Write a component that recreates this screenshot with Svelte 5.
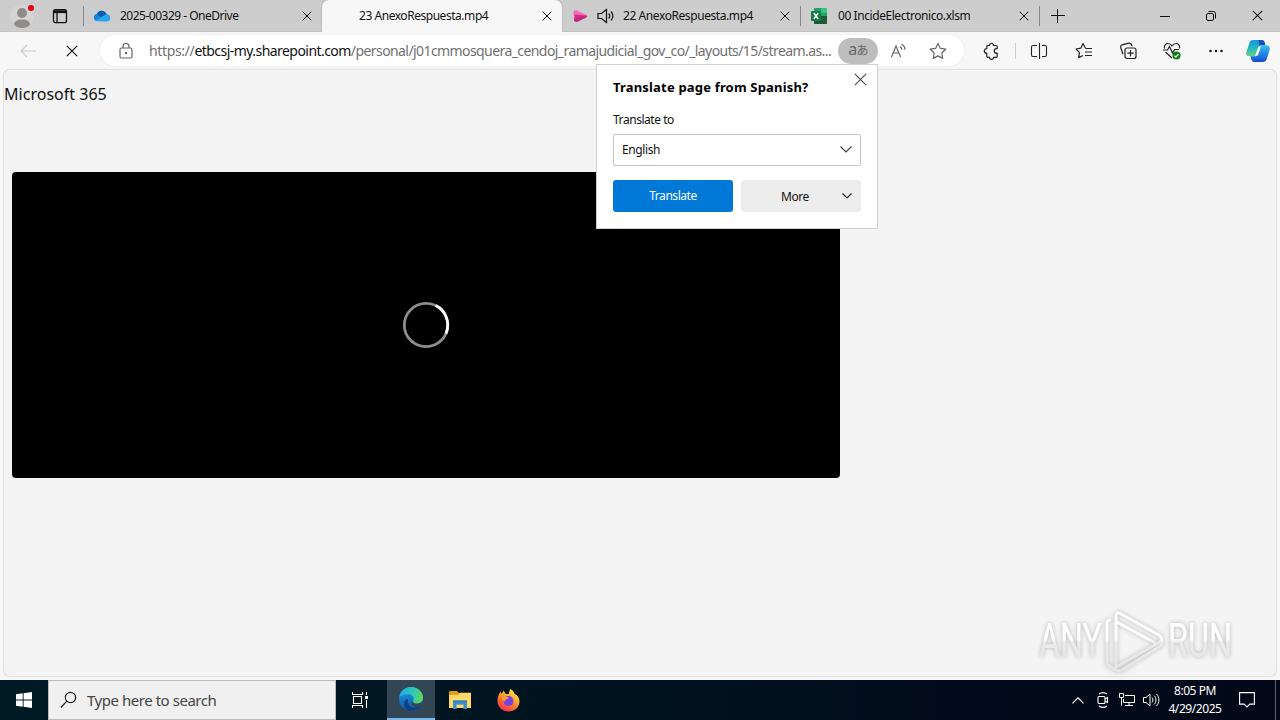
<script>
  const url = {
    scheme: 'https://',
    host: 'etbcsj-my.sharepoint.com',
    path: '/personal/j01cmmosquera_cendoj_ramajudicial_gov_co/_layouts/15/stream.as...'
  };
</script>

{#snippet cross(size)}
  <svg width={size} height={size} viewBox="0 0 10 10" fill="none" stroke="currentColor" stroke-width="1"><path d="M.7.7l8.6 8.6M9.3.7L.7 9.3" /></svg>
{/snippet}

<div class="screen">
  <header class="tabs">
    <div class="profile">
      <svg width="28" height="28" viewBox="0 0 28 28"><circle cx="14" cy="14" r="11.5" fill="#d6d4d3" /><circle cx="14" cy="11" r="5" fill="#8f8c8a" /><path d="M6 22.5c0-3.5 3.5-5 8-5s8 1.500 8 5c-1.500 2.500-5 3.500-8 3.500s-6.500-1-8-3.500z" fill="#8f8c8a" /><circle cx="23" cy="6" r="3" fill="#e3000b" /></svg>
    </div>
    <div class="workspace">
      <svg width="16" height="16" viewBox="0 0 16 16" fill="none" stroke="#111" stroke-width="1.300"><rect x="1.500" y="1.700" width="13" height="13" rx="2" /><path d="M2 3.700h12" stroke-width="2.800" /><path d="M5 5v9" /></svg>
    </div>
    <div class="tab first">
      <svg class="fav" width="18" height="16" viewBox="0 0 18 16"><path d="M4.500 13C2 13 .8 11.500.8 9.600c0-2 1.500-3.300 3.200-3.500C5 3.500 7 2.500 9 2.700c2.500.2 4 1.800 4.500 3.700 2.200.2 3.700 1.500 3.700 3.500s-1.400 3.300-3.500 3.300z" fill="#1684d8" /><path d="M4 6.100C5 3.500 7 2.500 9 2.700c2.300.2 4 1.800 4.400 3.700L8 9z" fill="#0b5cab" /><path d="M3 12.500l6.500-4.200c1-.8 2.500-1.900 4-1.900 2.200.2 3.700 1.500 3.700 3.500s-1.400 3.300-3.500 3.300H4.500z" fill="#2aa5ef" /></svg>
      <span class="t1">2025-00329 - OneDrive</span>
      <i class="shut">{@render cross(10)}</i>
    </div>
    <div class="tab active">
      <span class="t2">23 AnexoRespuesta.mp4</span>
      <i class="shut">{@render cross(10)}</i>
    </div>
    <div class="tab third">
      <svg class="fav" width="16" height="16" viewBox="0 0 16 16"><path d="M1.500 4.500C1.500 2.700 3 2 5 2.500l9 4.200c1.500.7 1.500 2 0 2.700L5.500 13.500C3.500 14.200 2 13 2 11.800V10z" fill="#f06bb4" /><path d="M1.500 5l.5 1.500 12.900 1c.2.900-.1 1.400-1 1.900L5.500 13.500C3.500 14.200 2 13 2 11.800l1-2.600z" fill="#df2690" /><path d="M3 9.700L15 8c0 .6-.3 1.100-1 1.400L5.500 13.500C3.500 14.200 2 13 2 11.800z" fill="#bb2a78" /></svg>
      <svg class="sound" width="18" height="16" viewBox="0 0 18 16" fill="none" stroke="#111" stroke-width="1.200"><path d="M1 5.500h3.500L9.500 1.500v13L4.500 10.500H1z" /><path d="M11.700 5.500c1.300 1.500 1.300 3.500 0 5M14 3.500c2.300 2.700 2.300 6.300 0 9" /></svg>
      <span class="t2">22 AnexoRespuesta.mp4</span>
      <i class="shut">{@render cross(10)}</i>
    </div>
    <div class="tab fourth">
      <svg class="fav" width="16" height="16" viewBox="0 0 16 16"><rect x="3" width="13" height="16" rx="1" fill="#21a366" /><path d="M3 8h13v7a1 1 0 0 1-1 1H4a1 1 0 0 1-1-1z" fill="#185c37" /><path d="M10 0h5a1 1 0 0 1 1 1v4h-6z" fill="#33c481" /><rect y="3" width="10" height="10" rx="1" fill="#107c41" /><path d="M2.800 5l4.400 6M7.200 5l-4.400 6" stroke="#fff" stroke-width="1.500" /></svg>
      <span class="t4">00 IncideElectronico.xlsm</span>
      <i class="shut">{@render cross(10)}</i>
    </div>
    <div class="add"><svg width="14" height="14" viewBox="0 0 14 14" stroke="#111" stroke-width="1"><path d="M0 6.500h14M6.500 0v14" /></svg></div>
    <div class="window">
      <span><svg width="10" height="10" viewBox="0 0 10 10" stroke="#111"><path d="M0 5.500h10" /></svg></span>
      <span><svg width="10" height="10" viewBox="0 0 10 10" fill="none" stroke="#111"><rect x=".5" y="2.500" width="7" height="7" rx="1.500" /><path d="M2.500.5h5a2 2 0 0 1 2 2v5" /></svg></span>
      <span>{@render cross(11)}</span>
    </div>
  </header>

  <nav class="toolbar">
    <div class="nav back"><svg width="16" height="14" viewBox="0 0 16 14" fill="none" stroke="#c9c9c9" stroke-width="1.200"><path d="M16 7H1M7 1L1 7l6 6" /></svg></div>
    <div class="nav stop">{@render cross(12)}</div>
    <div class="address">
      <svg class="lock" width="14" height="16" viewBox="0 0 14 16" fill="none" stroke="#666" stroke-width="1.200"><rect x="1" y="5" width="12" height="10" rx="1.500" /><path d="M4 5V3.500a3 3 0 0 1 6 0V5" /><circle cx="7" cy="10" r=".6" fill="#666" /></svg>
      <span class="url"><span class="scheme">{url.scheme}</span><b>{url.host}</b>{url.path}</span>
      <span class="lang">a<em>あ</em></span>
      <svg class="read" width="18" height="16" viewBox="0 0 18 16" fill="none" stroke="#666" stroke-width="1.200"><path d="M1.500 14L6 3 10.500 14M3.200 10h5.700M10 3.500c1.300.8 1.800 1.800 1.800 3.200M11.500 1.200c2.400 1.200 3.500 3 3.500 5.500" /></svg>
      <svg class="star" width="18" height="18" viewBox="0 0 18 18" fill="none" stroke="#666" stroke-width="1.200" stroke-linejoin="round"><path d="M9 1.500l2.400 4.900 5.300.8-3.900 3.800.9 5.400L9 13.900l-4.700 2.500.9-5.400L1.300 7.200l5.300-.8z" /></svg>
    </div>
    <div class="tools">
      <svg width="18" height="18" viewBox="0 0 18 18" fill="none" stroke="#222" stroke-width="1.200" stroke-linejoin="round"><path d="M4 3.500h2.500c0-3 4-3 4 0H13a1.200 1.200 0 0 1 1.200 1.200v2h-.7c-3 0-3 4.500 0 4.500h.7v3A1.200 1.200 0 0 1 13 15.400h-2.500c0 2.500-4 2.500-4 0H5a1.200 1.200 0 0 1-1.200-1.200v-3c-3.300 0-3.300-4.500 0-4.500z" /></svg>
      <i class="line"></i>
      <svg class="split" width="18" height="18" viewBox="0 0 18 18" fill="none" stroke="#222" stroke-width="1.100"><path d="M7 3.500H3A1.500 1.500 0 0 0 1.500 5v8A1.500 1.500 0 0 0 3 14.500h4M12 3.500h3A1.500 1.500 0 0 1 16.500 5v8a1.500 1.500 0 0 1-1.500 1.500h-3M9.500 1v16" /></svg>
      <svg class="fave" width="18" height="18" viewBox="0 0 18 18" fill="none" stroke="#222" stroke-width="1.200" stroke-linejoin="round"><path d="M10.500 6.200L8 1.500 5.800 6.200l-4.700.8 3.400 3.600-.8 5L8 13.500M10.500 6.500H17M10 10h7M10 13.500h7" /></svg>
      <svg class="coll" width="18" height="18" viewBox="0 0 18 18" fill="none" stroke="#222" stroke-width="1.200"><rect x="6" y="6" width="11" height="10.500" rx="2" /><path d="M11.500 8v6.500M8.300 11.200h6.400M4 12.300L1.700 5.500C1.400 4 2 3.200 3 2.800l7-1.600c1.300-.2 2.100.4 2.500 1.500l.5 1.500" /></svg>
      <svg class="heart" width="18" height="18" viewBox="0 0 18 18" fill="none" stroke="#222" stroke-width="1.200"><path d="M1.500 6.500C.8 3 3 1.500 5 1.500c2 0 3 1 4 2.300 1-1.300 2-2.300 4-2.300s4.200 1.500 3.500 5M2.500 10L9 16M0 8h4.500l2-3.500L9.500 11l2-3.500H16" /><circle cx="13.500" cy="13.500" r="4" fill="#107c10" stroke="none" /><path d="M11.500 13.700l1.400 1.400 2.500-3" stroke="#fff" /></svg>
      <svg class="dots" width="18" height="18" viewBox="0 0 18 18" fill="#222"><circle cx="3.500" cy="9" r="1.300" /><circle cx="9" cy="9" r="1.300" /><circle cx="14.500" cy="9" r="1.300" /></svg>
      <svg class="copilot" width="24" height="24" viewBox="0 0 24 24">
        <defs>
          <linearGradient id="cpA" x1="0" y1="0" x2="0" y2="1"><stop stop-color="#1694df" /><stop offset=".5" stop-color="#24b6c2" /><stop offset="1" stop-color="#62d37d" /></linearGradient>
          <linearGradient id="cpB" x1="0" y1="0" x2="0" y2="1"><stop stop-color="#35c3f2" /><stop offset=".5" stop-color="#2186e5" /><stop offset="1" stop-color="#174bd0" /></linearGradient>
        </defs>
        <path d="M7 1h8.500c2 0 2.800 1.200 3.300 3l.5 2H16c-2 0-3 1-3.500 2.600L10.300 15c-.5 1.500-1.300 2.300-3 2.300H3.500C1 17.300-.2 15.500.3 13.300L3.500 3.500C4 2 5.300 1 7 1z" fill="url(#cpA)" />
        <path d="M17 23H8.500c-2 0-2.800-1.200-3.300-3l-.7-2.700H8c2 0 3-1 3.500-2.600L13.700 9c.5-1.800 1.300-2.700 3-2.700h3.800c2.500 0 3.700 2 3.200 4.400l-3.200 9.800C20 22 18.700 23 17 23z" fill="url(#cpB)" />
        <path d="M12.500 1h3c2 0 2.800 1.200 3.300 3l.6 2.300H16c-1.200 0-2 .4-2.600 1z" fill="#1856b4" />
        <path d="M12.800 8.300h1.100L11.400 15.800h-1.300z" fill="#f7f7f7" stroke="#f7f7f7" stroke-width="1.300" />
      </svg>
    </div>
  </nav>

  <main>
    <div class="page">
      <h1>Microsoft 365</h1>
      <div class="video">
        <svg width="48" height="48" viewBox="0 0 48 48" fill="none" stroke-width="2.800"><circle cx="24" cy="24" r="21.700" stroke="#8d8d8d" /><path d="M33.800 4.600A21.700 21.700 0 0 1 43.900 32.700" stroke="#fff" /></svg>
      </div>
    </div>
    <div class="watermark">
      <svg width="240" height="72" viewBox="0 0 240 72">
        <defs><linearGradient id="wm" x1="0" y1="12" x2="0" y2="62" gradientUnits="userSpaceOnUse"><stop stop-color="#fff" /><stop offset=".45" stop-color="#fff" /><stop offset=".5" stop-color="#ebebeb" /><stop offset="1" stop-color="#e6e6e6" /></linearGradient></defs>
        <g class="brand">
          <text x="7" y="52" textLength="63" lengthAdjust="spacingAndGlyphs">ANY</text>
          <text x="136" y="52" textLength="64" lengthAdjust="spacingAndGlyphs">RUN</text>
          <path d="M79 15c-3 0-4 1-4 4v38c0 3 1 4 4 5l5 3c2 1 4 1 6 0l38-24c3-2 3-5 1-7M84 58V11c0-3 2-4 5-2l38 21c3 2 3 5 1 7L84 62zM85 17l38 21" />
        </g>
      </svg>
    </div>
  </main>

  <aside class="popup">
    <i class="dismiss">{@render cross(13)}</i>
    <h2>Translate page from Spanish?</h2>
    <label for="target">Translate to</label>
    <div class="select" id="target"><span>English</span><svg width="12" height="7" viewBox="0 0 12 7" fill="none" stroke="#444" stroke-width="1.200"><path d="M.5.5L6 6 11.500.5" /></svg></div>
    <div class="actions">
      <button class="primary">Translate</button>
      <button class="more"><span>More</span><svg width="10" height="6" viewBox="0 0 10 6" fill="none" stroke="#222" stroke-width="1.200"><path d="M.5.5L5 5 9.500.5" /></svg></button>
    </div>
  </aside>

  <footer>
    <div class="start"><svg width="16" height="16" viewBox="0 0 16 16" fill="#fff"><path d="M0 2.300L6.700 1.300v6.200H0zM7.600 1.200L16 0v7.500H7.600zM0 8.400h6.700v6.300L0 13.700zM7.600 8.400H16V16l-8.400-1.200z" /></svg></div>
    <div class="search"><svg width="18" height="18" viewBox="0 0 18 18" fill="none" stroke="#222" stroke-width="1.200"><circle cx="10.500" cy="6.500" r="5.200" /><path d="M6.900 10.200L.8 16.500" /></svg><span>Type here to search</span></div>
    <div class="app"><svg width="16" height="16" viewBox="0 0 16 16" fill="none" stroke="#fff" stroke-width="1.100"><path d="M.5 0v2.500h10V0M.5 16v-2.500h10V16M1.500 4.500h8v7h-8zM14.500 0v3M14.500 8v8" /><path d="M13 4h3v3h-3z" fill="#fff" stroke="none" /></svg></div>
    <div class="app current">
      <svg width="24" height="24" viewBox="0 0 24 24">
        <defs><linearGradient id="edA" x1="0" x2="1" y1=".3" y2=".5"><stop stop-color="#24a9e4" /><stop offset=".55" stop-color="#2fc5be" /><stop offset="1" stop-color="#62d957" /></linearGradient><linearGradient id="edB" x1="0" x2="0" y1="0" y2="1"><stop stop-color="#1e9ee2" /><stop offset="1" stop-color="#0b58ac" /></linearGradient></defs>
        <circle cx="12" cy="12" r="12" fill="url(#edB)" />
        <path d="M.3 10C1.500 3.500 7 0 12 0c7.500 0 12 5.500 12 10.500 0 4-3 6.200-6.300 6.200-2.300 0-4-.8-4-1.800 0-.6 1-1.200 1-2.900 0-2.700-2.700-4.800-6-4.800C5 7.200 2 8.500.3 10z" fill="url(#edA)" />
        <path d="M9 12c-1.500 5 3 9.500 8 8.500 1.800-.3 3.300-1.200 4.500-1.900l.7-.3C20 22 16 24 12 24c-4 0-7-3.500-7-7.500C5 14 6.800 12.500 9 12z" fill="#123f82" />
        <path d="M14 14.800c.6 1.200 2 1.900 3.800 1.900 2.500 0 4.500-1 5.500-2.500-.2 1.700-.5 2.800-1.200 4-2.500 1.800-6 2-8.500.5-2-1.200-2-3.500.4-3.900z" fill="#334653" />
      </svg>
    </div>
    <div class="app">
      <svg width="22" height="18" viewBox="0 0 22 18"><path d="M0 1.500A1.500 1.500 0 0 1 1.500 0H8l2 2h12v5H0z" fill="#e79b1d" /><path d="M0 4h9l2-2.300h11V17H0z" fill="#ffd968" /><path d="M4 9.500h14V18h-3.500v-4.200h-7V18H4z" fill="#3d91cf" /><path d="M4 9.500h14v2H4z" fill="#2f80c0" /></svg>
    </div>
    <div class="app">
      <svg width="23" height="24" viewBox="0 0 23 24">
        <defs><linearGradient id="ffA" x1=".8" x2=".2" y1="0" y2="1"><stop stop-color="#fff34f" /><stop offset=".4" stop-color="#ffa32b" /><stop offset=".75" stop-color="#ff5637" /><stop offset="1" stop-color="#ee2375" /></linearGradient></defs>
        <path d="M13 1c3 1.300 4 3 4.300 4.500C21 7.500 22.700 10.500 22.500 14 22.200 19.500 17.500 23.500 11.500 23.500S.5 19 .5 13C.5 9 1.700 6 3.500 3.500l.8 2.300C5.500 4.500 6 3.800 6.500 2.500L8.800 6h3z" fill="url(#ffA)" /><circle cx="11.500" cy="13" r="5" fill="#7542e5" /><path d="M5 9c2-1.500 5-.8 7 .8-1 1.500-4 1.500-4 3.700-2-.8-3.500-2.500-3-4.500z" fill="#ff9a2d" />
      </svg>
    </div>
    <div class="tray">
      <svg class="up" width="12" height="7" viewBox="0 0 12 7" fill="none" stroke="#fff" stroke-width="1.200"><path d="M.5 6.300L6 .8l5.500 5.500" /></svg>
      <svg class="meet" width="12" height="16" viewBox="0 0 12 16" fill="none" stroke="#fff" stroke-width="1.100"><rect x="1" y="4.500" width="7" height="7" rx="1" /><path d="M8 7l2.500-1.500v5L8 9M2 2c2.300-1.600 5.700-1.600 8 0M2 14c2.300 1.600 5.700 1.600 8 0" /></svg>
      <svg class="net" width="16" height="14" viewBox="0 0 16 14" fill="none" stroke="#fff"><path d="M6 2.500h9.500v7H4.500V6M10 9.500v3M6 12.500h8M.5.500h4v4h-4zM2.500 4.500v8" /></svg>
      <svg class="vol" width="17" height="14" viewBox="0 0 17 14" fill="none" stroke="#fff"><path d="M.5 4.500h2.500L7 1v12L3 9.500H.5zM9 4.500c1.200 1.500 1.200 3.500 0 5M11.300 2.700c2.200 2.500 2.200 6.100 0 8.600M13.500 1c3.200 3.500 3.200 8.500 0 12" /></svg>
      <div class="clock"><span class="time">8:05 PM</span><span class="date">4/29/2025</span></div>
      <svg class="note" width="16" height="16" viewBox="0 0 16 16" fill="none" stroke="#fff" stroke-width="1.100"><path d="M.6.6h14.800v11.500h-4.500L8 15l-2.900-2.900H.6z" /></svg>
      <i class="peek"></i>
    </div>
  </footer>
</div>

<style>
  :global(body) { margin: 0; overflow: hidden; }
  * { box-sizing: border-box; }
  svg { display: block; flex: none; }
  span { white-space: nowrap; }
  .screen { position: relative; display: flex; flex-direction: column; width: 1280px; height: 720px; background: #f7f7f7; font-family: "Noto Sans", "Noto Sans CJK JP", sans-serif; color: #111; }

  .tabs { display: flex; height: 32px; background: #cdcdcd; border-bottom: 1px solid #c2c2c2; }
  .profile { width: 44px; padding: 2px 0 0 8px; }
  .workspace { width: 40px; padding: 8px 0 0 8px; background: linear-gradient(#888, #888) no-repeat 39px 6px / 1px 20px; }
  .tab { display: flex; align-items: center; font-size: 12px; width: 239px; color: #111; }
  .tab .shut { margin-left: auto; margin-right: 10px; }
  .first { width: 238px; padding-left: 9px; }
  .first .fav { margin-right: 9px; }
  .active { width: 240px; height: 32px; background: #f7f7f7; border-radius: 7px 7px 0 0; padding: 0 0 1px 37px; box-shadow: 0 0 2px #999; clip-path: inset(0 -2px 0 -2px); }
  .third { padding-left: 10px; border-right: 1px solid transparent; background: linear-gradient(#888, #888) no-repeat 238px 6px / 1px 20px; background-origin: border-box; }
  .third .sound { margin: 0 8px 0 9px; }
  .fourth { padding-left: 10px; border-right: 1px solid transparent; background: linear-gradient(#888, #888) no-repeat 238px 6px / 1px 20px; background-origin: border-box; }
  .fourth .fav { margin-right: 11px; }
  .t1 { letter-spacing: -.5px; }
  .t2 { letter-spacing: -.46px; }
  .third .t2 { letter-spacing: -.42px; }
  .t4 { letter-spacing: -.43px; }
  .add { padding: 9px 0 0 11px; }
  .window { margin-left: auto; display: flex; }
  .window span { width: 46px; display: grid; place-items: center; }

  .toolbar { display: flex; align-items: center; height: 37px; flex: none; }
  .back { width: 56px; padding-left: 20px; }
  .stop { width: 44px; padding-left: 10px; }
  .address { width: 864px; height: 31px; background: #fff; border-radius: 16px; display: flex; align-items: center; padding-left: 19px; color: #707070; box-shadow: 0 0 2px #e2e2e2; }
  .url { margin-left: 16px; width: 689px; font-size: 14px; letter-spacing: -.58px; }
  .scheme { letter-spacing: -.35px; }
  .url b { color: #111; font-weight: 400; letter-spacing: -.55px; }
  .lang { width: 40px; height: 26px; border-radius: 13px; background: #bdbdbd; color: #666; font-size: 16px; line-height: 23px; text-align: center; letter-spacing: -.7px; }
  .lang em { font-size: 12px; font-style: normal; }
  .read { margin-left: 12px; }
  .star { margin-left: 21px; }
  .tools { display: flex; align-items: center; padding-left: 19px; }
  .line { width: 1px; height: 16px; background: #ccc; margin: 0 14px; }
  .fave { margin-left: 27px; }
  .coll, .heart, .dots { margin-left: 26px; }
  .copilot { margin-left: 21px; }

  main { position: relative; flex: 1; padding: 0 3px 3px; min-height: 0; }
  .page { height: 608px; background: #f4f4f4; border: 1px solid #e2e2e2; border-radius: 7px; box-shadow: 0 0 1px #ddd; }
  h1 { margin: 13px 0 0; font-size: 16px; line-height: 22px; font-weight: 400; letter-spacing: .02px; }
  .video { width: 828px; height: 306px; margin: 67px 0 0 8px; border-radius: 4px; background: #000; display: grid; place-items: center; }
  .watermark { position: absolute; left: 1032px; top: 536px; }
  .brand { fill: none; stroke: url(#wm); stroke-width: 3; filter: drop-shadow(0 0 2px #b5b5b5); }
  .brand text { font: 49px "Roboto", sans-serif; fill: url(#wm); stroke-width: .2; }
  .brand path { stroke-linejoin: round; }

  .popup { position: absolute; left: 596px; top: 64px; width: 282px; height: 165px; padding: 12px 16px 16px; background: #fff; border: 1px solid #d0d0d0; color: #111; }
  .dismiss { position: absolute; right: 10px; top: 8px; color: #555; }
  h2 { margin: 0; font-size: 13px; line-height: 20px; font-weight: 700; letter-spacing: .18px; white-space: nowrap; color: #000; }
  label { display: block; margin-top: 14px; font-size: 12px; line-height: 18px; letter-spacing: -.45px; }
  .select { display: flex; align-items: center; justify-content: space-between; height: 32px; margin-top: 5px; padding: 0 8px 1px; border: 1px solid #c4c4c4; border-radius: 2px; font-size: 12px; letter-spacing: -.4px; }
  .actions { display: flex; gap: 8px; margin-top: 14px; }
  button { width: 120px; height: 32px; border: 0; border-radius: 3px; padding: 0 0 1px; font: 12px "Noto Sans", sans-serif; letter-spacing: -.45px; }
  .primary { background: #0078d7; color: #fff; }
  .more { display: flex; align-items: center; justify-content: space-between; padding: 0 9px 0 40px; background: #ededed; color: #111; }

  footer { flex: none; display: flex; height: 40px; background: linear-gradient(90deg, #001a24, #00141f 45%, #020b1b 75%, #020817); color: #fff; }
  .start { width: 48px; display: grid; place-items: center; }
  .search { width: 288px; display: flex; align-items: center; padding-left: 11px; background: #f0f0f0; border: 1px solid #bbb; color: #444; font-size: 15px; letter-spacing: -.46px; }
  .search span { margin-left: 9px; }
  .app { width: 48px; margin-right: 1px; display: grid; place-items: center; }
  .app + .app + .app { margin-right: 0; }
  .current { background: #334653; border-bottom: 2px solid #76b9ed; margin-left: 2px; }
  .app:has(+ .current) { margin-right: 1px; }
  .tray { margin-left: auto; display: flex; align-items: center; }
  .meet { margin-left: 13px; }
  .net { margin-left: 10px; }
  .vol { margin-left: 8px; }
  .clock { width: 72px; margin-left: -1px; display: flex; flex-direction: column; align-items: center; font-size: 12px; line-height: 18px; letter-spacing: -.43px; }
  .note { margin-left: 8px; }
  .peek { width: 1px; height: 40px; background: #59616d; margin: 0 4px 0 20px; }
</style>
